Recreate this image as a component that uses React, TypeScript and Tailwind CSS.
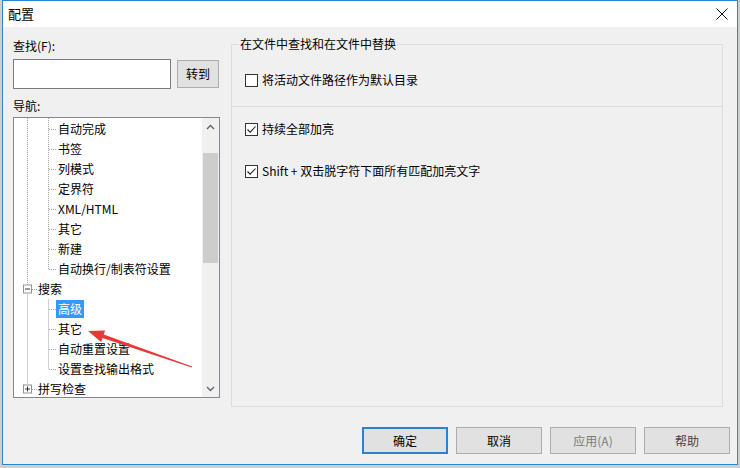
import React from 'react';

type Row = { t: string; lvl: 0 | 1; sel?: boolean };

const rows: Row[] = [
  { t: '自动完成', lvl: 1 },
  { t: '书签', lvl: 1 },
  { t: '列模式', lvl: 1 },
  { t: '定界符', lvl: 1 },
  { t: 'XML/HTML', lvl: 1 },
  { t: '其它', lvl: 1 },
  { t: '新建', lvl: 1 },
  { t: '自动换行/制表符设置', lvl: 1 },
  { t: '搜索', lvl: 0 },
  { t: '高级', lvl: 1, sel: true },
  { t: '其它', lvl: 1 },
  { t: '自动重置设置', lvl: 1 },
  { t: '设置查找输出格式', lvl: 1 },
  { t: '拼写检查', lvl: 0 },
];

const font = { fontFamily: '"Noto Sans CJK SC", "Noto Sans", sans-serif' };

const Check: React.FC<{ on?: boolean }> = ({ on }) => (
  <span className="w-[13px] h-[13px] border border-[#333] bg-white flex items-center justify-center shrink-0">
    {on && (
      <svg width="11" height="11" viewBox="0 0 11 11">
        <path d="M1.5 5.5 L4.2 8.2 L9.5 2.5" fill="none" stroke="#222" strokeWidth="1.1" />
      </svg>
    )}
  </span>
);

// tree connector lines and expand boxes, drawn over the row list
const TreeLines: React.FC = () => {
  const cy = (i: number) => 11 + 20 * i + 0.5;
  const kids = [0, 1, 2, 3, 4, 5, 6, 7, 9, 10, 11, 12];
  return (
    <svg className="absolute left-0 top-0 pointer-events-none" width="188" height="280">
      <g stroke="#a0a0a0" strokeWidth="1" strokeDasharray="1 1" fill="none">
        <line x1="13.5" y1="0" x2="13.5" y2={cy(8) - 5} />
        <line x1="13.5" y1={cy(8) + 5} x2="13.5" y2={cy(13) - 5} />
        <line x1="34.5" y1="0" x2="34.5" y2={cy(7)} />
        <line x1="34.5" y1={cy(8) + 10} x2="34.5" y2={cy(12)} />
        {kids.map((i) => (
          <line key={i} x1="35" y1={cy(i)} x2="43" y2={cy(i)} />
        ))}
        <line x1="18" y1={cy(8)} x2="23" y2={cy(8)} />
        <line x1="18" y1={cy(13)} x2="23" y2={cy(13)} />
      </g>
      {[8, 13].map((i) => (
        <g key={i}>
          <rect x="9.5" y={cy(i) - 4.5} width="8" height="8" fill="#fff" stroke="#919191" />
          <line x1="11" y1={cy(i) - 0.5} x2="16" y2={cy(i) - 0.5} stroke="#333" />
          {i === 13 && <line x1="13.5" y1={cy(i) - 3} x2="13.5" y2={cy(i) + 2} stroke="#333" />}
        </g>
      ))}
    </svg>
  );
};

const App: React.FC = () => {
  return (
    <div className="w-[740px] h-[468px] bg-[#cfcfcf] relative overflow-hidden text-[12px] text-black" style={font}>
      <div className="ml-[2px] w-[736px] h-[465px] border border-[#2a86d2] bg-[#f0f0f0] flex flex-col">
        {/* Title bar */}
        <div className="h-[26px] bg-white flex items-center justify-between pl-[5px] pr-[9px] shrink-0">
          <span className="text-[13px] leading-[16px]">配置</span>
          <svg width="12" height="12" viewBox="0 0 12 12">
            <path d="M0.5 0.5 L11.5 11.5 M11.5 0.5 L0.5 11.5" stroke="#111" strokeWidth="1" />
          </svg>
        </div>

        {/* Body */}
        <div className="flex items-start h-[380px] shrink-0">
          {/* Left column */}
          <div className="ml-[10px] w-[207px] pt-[11px] flex flex-col">
            <div className="leading-[16px] h-[16px]">查找(F):</div>
            <div className="mt-[5px] flex items-center">
              <div className="w-[158px] h-[30px] bg-white border border-[#7a7a7a]" />
              <button className="ml-[6px] w-[42px] h-[28px] bg-[#e1e1e1] border border-[#adadad] leading-[16px]">
                转到
              </button>
            </div>
            <div className="mt-[9px] leading-[16px] h-[16px]">导航:</div>
            <div className="mt-[3px] h-[281px] border border-[#828790] bg-white flex">
              <div className="relative w-[188px] h-full overflow-hidden pt-[1px]">
                <TreeLines />
                {rows.map((r, i) => (
                  <div
                    key={i}
                    className={`h-[20px] flex items-center ${r.lvl === 1 ? 'pl-[42px]' : 'pl-[22px]'}`}
                  >
                    <span
                      className={`px-[2px] h-[18px] leading-[18px] whitespace-nowrap ${
                        r.sel ? 'bg-[#3399ff] text-white' : ''
                      }`}
                    >
                      {r.t}
                    </span>
                  </div>
                ))}
              </div>
              {/* Scrollbar */}
              <div className="w-[17px] h-full bg-[#f0f0f0] flex flex-col">
                <div className="h-[17px] flex items-center justify-center">
                  <svg width="9" height="6" viewBox="0 0 9 6">
                    <path d="M1 5 L4.5 1.5 L8 5" fill="none" stroke="#606060" strokeWidth="1.3" />
                  </svg>
                </div>
                <div className="mt-[18px] mx-[1px] h-[110px] bg-[#cdcdcd]" />
                <div className="flex-1" />
                <div className="h-[17px] flex items-center justify-center">
                  <svg width="9" height="6" viewBox="0 0 9 6">
                    <path d="M1 1 L4.5 4.5 L8 1" fill="none" stroke="#606060" strokeWidth="1.3" />
                  </svg>
                </div>
              </div>
            </div>
          </div>

          {/* Right column */}
          <div className="ml-[11px] pt-[9px]">
            <fieldset className="w-[492px] h-[371px] border border-[#dcdcdc]">
              <legend className="ml-[7px] px-[1px] leading-[16px]">在文件中查找和在文件中替换</legend>
              <div className="mt-[20px] pl-[13px] h-[16px] flex items-center gap-[4px]">
                <Check />
                <span className="leading-[16px]">将活动文件路径作为默认目录</span>
              </div>
              <div className="mt-[18px] h-px bg-[#dcdcdc]" />
              <div className="mt-[14px] pl-[13px] h-[16px] flex items-center gap-[4px]">
                <Check on />
                <span className="leading-[16px]">持续全部加亮</span>
              </div>
              <div className="mt-[26px] pl-[13px] h-[16px] flex items-center gap-[4px]">
                <Check on />
                <span className="leading-[16px]">Shift + 双击脱字符下面所有匹配加亮文字</span>
              </div>
            </fieldset>
          </div>
        </div>

        {/* Buttons */}
        <div className="mt-[20px] flex justify-end gap-[8px] pr-[7px]">
          <button className="w-[86px] h-[27px] bg-[#e1e1e1] border-2 border-[#2a82d4] leading-[16px]">确定</button>
          <button className="w-[86px] h-[27px] bg-[#e1e1e1] border border-[#adadad] leading-[16px]">取消</button>
          <button className="w-[86px] h-[27px] bg-[#e1e1e1] border border-[#adadad] leading-[16px] text-[#7a7a7a]">
            应用(A)
          </button>
          <button className="w-[86px] h-[27px] bg-[#e1e1e1] border border-[#adadad] leading-[16px] text-[#444]">
            帮助
          </button>
        </div>
      </div>

      {/* Red annotation arrow */}
      <svg className="absolute left-0 top-0 pointer-events-none" width="740" height="468">
        <polygon
          points="88,331 105.1,330.6 103.7,334.6 192.2,366.5 191.8,367.5 102.5,338 101.1,342"
          fill="#e53935"
        />
      </svg>
    </div>
  );
};

export default App;
